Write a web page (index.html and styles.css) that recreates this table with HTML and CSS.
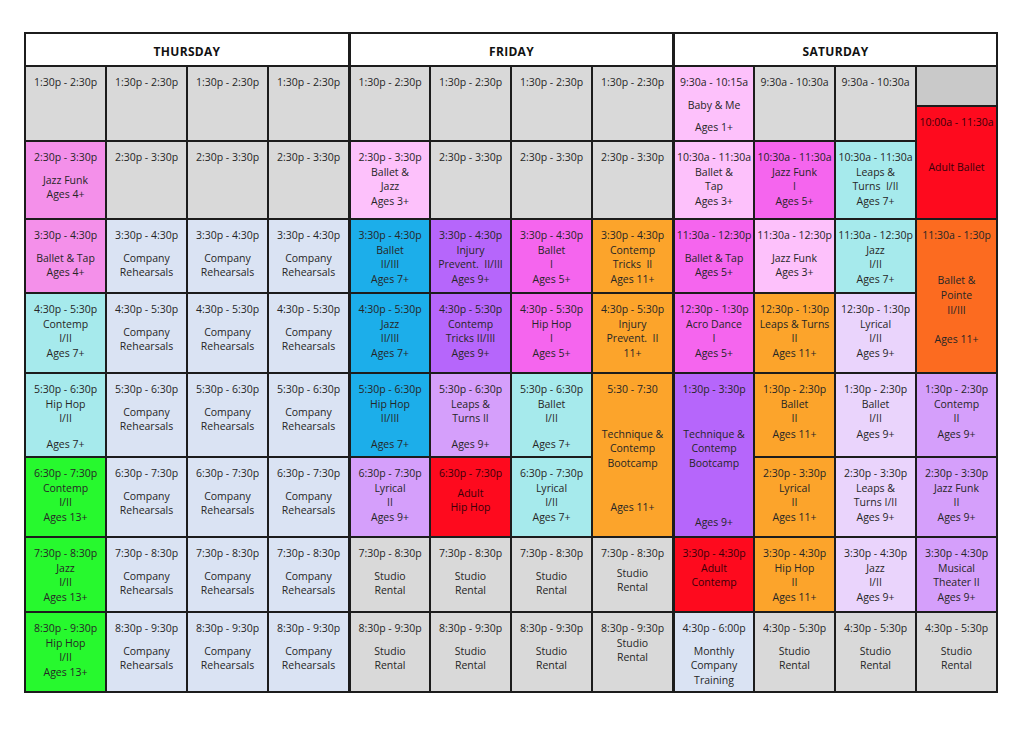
FILE: index.html
```html
<!DOCTYPE html>
<html lang="en">
<head>
<meta charset="utf-8">
<title>Class Schedule</title>
<link rel="stylesheet" href="styles.css">
</head>
<body>
<div class="schedule">
  <div class="day">THURSDAY</div>
  <div class="day ds">FRIDAY</div>
  <div class="day ds">SATURDAY</div>

  <!-- Row 1 -->
  <div class="cell gray tall"><p>1:30p - 2:30p</p></div>
  <div class="cell gray tall"><p>1:30p - 2:30p</p></div>
  <div class="cell gray tall"><p>1:30p - 2:30p</p></div>
  <div class="cell gray tall"><p>1:30p - 2:30p</p></div>
  <div class="cell gray tall ds"><p>1:30p - 2:30p</p></div>
  <div class="cell gray tall"><p>1:30p - 2:30p</p></div>
  <div class="cell gray tall"><p>1:30p - 2:30p</p></div>
  <div class="cell gray tall"><p>1:30p - 2:30p</p></div>
  <div class="cell lpink tall ds"><p>9:30a - 10:15a</p><p class="gm">Baby &amp; Me</p><p class="gm">Ages 1+</p></div>
  <div class="cell gray tall"><p>9:30a - 10:30a</p></div>
  <div class="cell gray tall"><p>9:30a - 10:30a</p></div>
  <div class="cell dgray"></div>
  <div class="cell red tall"><p>10:00a - 11:30a</p><p class="gxl">Adult Ballet</p></div>

  <!-- Row 2 -->
  <div class="cell pink"><p>2:30p - 3:30p</p><p class="gm">Jazz Funk</p><p>Ages 4+</p></div>
  <div class="cell gray"><p>2:30p - 3:30p</p></div>
  <div class="cell gray"><p>2:30p - 3:30p</p></div>
  <div class="cell gray"><p>2:30p - 3:30p</p></div>
  <div class="cell lpink ds"><p>2:30p - 3:30p</p><p>Ballet &amp;</p><p>Jazz</p><p>Ages 3+</p></div>
  <div class="cell gray"><p>2:30p - 3:30p</p></div>
  <div class="cell gray"><p>2:30p - 3:30p</p></div>
  <div class="cell gray"><p>2:30p - 3:30p</p></div>
  <div class="cell lpink ds"><p>10:30a - 11:30a</p><p>Ballet &amp;</p><p>Tap</p><p>Ages 3+</p></div>
  <div class="cell magenta"><p>10:30a - 11:30a</p><p>Jazz Funk</p><p>I</p><p>Ages 5+</p></div>
  <div class="cell cyan"><p>10:30a - 11:30a</p><p>Leaps &amp;</p><p>Turns&nbsp; I/II</p><p>Ages 7+</p></div>

  <!-- Row 3 -->
  <div class="cell pink"><p>3:30p - 4:30p</p><p class="gm">Ballet &amp; Tap</p><p>Ages 4+</p></div>
  <div class="cell company"><p>3:30p - 4:30p</p><p class="gm">Company</p><p>Rehearsals</p></div>
  <div class="cell company"><p>3:30p - 4:30p</p><p class="gm">Company</p><p>Rehearsals</p></div>
  <div class="cell company"><p>3:30p - 4:30p</p><p class="gm">Company</p><p>Rehearsals</p></div>
  <div class="cell blue ds"><p>3:30p - 4:30p</p><p>Ballet</p><p>II/III</p><p>Ages 7+</p></div>
  <div class="cell purple"><p>3:30p - 4:30p</p><p>Injury</p><p>Prevent.&nbsp; II/III</p><p>Ages 9+</p></div>
  <div class="cell magenta"><p>3:30p - 4:30p</p><p>Ballet</p><p>I</p><p>Ages 5+</p></div>
  <div class="cell orange"><p>3:30p - 4:30p</p><p>Contemp</p><p>Tricks&nbsp; II</p><p>Ages 11+</p></div>
  <div class="cell magenta ds"><p>11:30a - 12:30p</p><p class="gm">Ballet &amp; Tap</p><p>Ages 5+</p></div>
  <div class="cell lpink"><p>11:30a - 12:30p</p><p class="gm">Jazz Funk</p><p>Ages 3+</p></div>
  <div class="cell cyan"><p>11:30a - 12:30p</p><p>Jazz</p><p>I/II</p><p>Ages 7+</p></div>
  <div class="cell dorange tall"><p>11:30a - 1:30p</p><p class="gxl">Ballet &amp;</p><p class="gt">Pointe</p><p>II/III</p><p class="gl">Ages 11+</p></div>

  <!-- Row 4 -->
  <div class="cell cyan"><p>4:30p - 5:30p</p><p>Contemp</p><p>I/II</p><p>Ages 7+</p></div>
  <div class="cell company"><p>4:30p - 5:30p</p><p class="gm">Company</p><p>Rehearsals</p></div>
  <div class="cell company"><p>4:30p - 5:30p</p><p class="gm">Company</p><p>Rehearsals</p></div>
  <div class="cell company"><p>4:30p - 5:30p</p><p class="gm">Company</p><p>Rehearsals</p></div>
  <div class="cell blue ds"><p>4:30p - 5:30p</p><p>Jazz</p><p>II/III</p><p>Ages 7+</p></div>
  <div class="cell purple"><p>4:30p - 5:30p</p><p>Contemp</p><p>Tricks II/III</p><p>Ages 9+</p></div>
  <div class="cell magenta"><p>4:30p - 5:30p</p><p>Hip Hop</p><p>I</p><p>Ages 5+</p></div>
  <div class="cell orange"><p>4:30p - 5:30p</p><p>Injury</p><p>Prevent.&nbsp; II</p><p>11+</p></div>
  <div class="cell magenta ds"><p>12:30p - 1:30p</p><p>Acro Dance</p><p>I</p><p>Ages 5+</p></div>
  <div class="cell orange"><p>12:30p - 1:30p</p><p>Leaps &amp; Turns</p><p>II</p><p>Ages 11+</p></div>
  <div class="cell vlpurple"><p>12:30p - 1:30p</p><p>Lyrical</p><p>I/II</p><p>Ages 9+</p></div>

  <!-- Row 5 -->
  <div class="cell cyan"><p>5:30p - 6:30p</p><p>Hip Hop</p><p>I/II</p><p class="gb">Ages 7+</p></div>
  <div class="cell company"><p>5:30p - 6:30p</p><p class="gm">Company</p><p>Rehearsals</p></div>
  <div class="cell company"><p>5:30p - 6:30p</p><p class="gm">Company</p><p>Rehearsals</p></div>
  <div class="cell company"><p>5:30p - 6:30p</p><p class="gm">Company</p><p>Rehearsals</p></div>
  <div class="cell blue ds"><p>5:30p - 6:30p</p><p>Hip Hop</p><p>II/III</p><p class="gb">Ages 7+</p></div>
  <div class="cell lpurple"><p>5:30p - 6:30p</p><p>Leaps &amp;</p><p>Turns II</p><p class="gb">Ages 9+</p></div>
  <div class="cell cyan"><p>5:30p - 6:30p</p><p>Ballet</p><p>I/II</p><p class="gb">Ages 7+</p></div>
  <div class="cell orange tall"><p>5:30 - 7:30</p><p class="gxl">Technique &amp;</p><p>Contemp</p><p>Bootcamp</p><p class="gxl">Ages 11+</p></div>
  <div class="cell purple tall ds"><p>1:30p - 3:30p</p><p class="gxl">Technique &amp;</p><p>Contemp</p><p>Bootcamp</p><p class="gxxl">Ages 9+</p></div>
  <div class="cell orange"><p>1:30p - 2:30p</p><p>Ballet</p><p>II</p><p class="gt">Ages 11+</p></div>
  <div class="cell vlpurple"><p>1:30p - 2:30p</p><p>Ballet</p><p>I/II</p><p class="gt">Ages 9+</p></div>
  <div class="cell lpurple"><p>1:30p - 2:30p</p><p>Contemp</p><p>II</p><p class="gt">Ages 9+</p></div>

  <!-- Row 6 -->
  <div class="cell green"><p>6:30p - 7:30p</p><p>Contemp</p><p>I/II</p><p>Ages 13+</p></div>
  <div class="cell company"><p>6:30p - 7:30p</p><p class="gm">Company</p><p>Rehearsals</p></div>
  <div class="cell company"><p>6:30p - 7:30p</p><p class="gm">Company</p><p>Rehearsals</p></div>
  <div class="cell company"><p>6:30p - 7:30p</p><p class="gm">Company</p><p>Rehearsals</p></div>
  <div class="cell lpurple ds"><p>6:30p - 7:30p</p><p>Lyrical</p><p>II</p><p>Ages 9+</p></div>
  <div class="cell red"><p>6:30p - 7:30p</p><p class="gs">Adult</p><p>Hip Hop</p></div>
  <div class="cell cyan"><p>6:30p - 7:30p</p><p>Lyrical</p><p>I/II</p><p>Ages 7+</p></div>
  <div class="cell orange"><p>2:30p - 3:30p</p><p>Lyrical</p><p>II</p><p>Ages 11+</p></div>
  <div class="cell vlpurple"><p>2:30p - 3:30p</p><p>Leaps &amp;</p><p>Turns I/II</p><p>Ages 9+</p></div>
  <div class="cell lpurple"><p>2:30p - 3:30p</p><p>Jazz Funk</p><p>II</p><p>Ages 9+</p></div>

  <!-- Row 7 -->
  <div class="cell green"><p>7:30p - 8:30p</p><p>Jazz</p><p>I/II</p><p>Ages 13+</p></div>
  <div class="cell company"><p>7:30p - 8:30p</p><p class="gm">Company</p><p>Rehearsals</p></div>
  <div class="cell company"><p>7:30p - 8:30p</p><p class="gm">Company</p><p>Rehearsals</p></div>
  <div class="cell company"><p>7:30p - 8:30p</p><p class="gm">Company</p><p>Rehearsals</p></div>
  <div class="cell gray ds"><p>7:30p - 8:30p</p><p class="gm">Studio</p><p>Rental</p></div>
  <div class="cell gray"><p>7:30p - 8:30p</p><p class="gm">Studio</p><p>Rental</p></div>
  <div class="cell gray"><p>7:30p - 8:30p</p><p class="gm">Studio</p><p>Rental</p></div>
  <div class="cell gray"><p>7:30p - 8:30p</p><p class="gs">Studio</p><p>Rental</p></div>
  <div class="cell red ds"><p>3:30p - 4:30p</p><p>Adult</p><p>Contemp</p></div>
  <div class="cell orange"><p>3:30p - 4:30p</p><p>Hip Hop</p><p>II</p><p>Ages 11+</p></div>
  <div class="cell vlpurple"><p>3:30p - 4:30p</p><p>Jazz</p><p>I/II</p><p>Ages 9+</p></div>
  <div class="cell lpurple"><p>3:30p - 4:30p</p><p>Musical</p><p>Theater II</p><p>Ages 9+</p></div>

  <!-- Row 8 -->
  <div class="cell green"><p>8:30p - 9:30p</p><p>Hip Hop</p><p>I/II</p><p>Ages 13+</p></div>
  <div class="cell company"><p>8:30p - 9:30p</p><p class="gm">Company</p><p>Rehearsals</p></div>
  <div class="cell company"><p>8:30p - 9:30p</p><p class="gm">Company</p><p>Rehearsals</p></div>
  <div class="cell company"><p>8:30p - 9:30p</p><p class="gm">Company</p><p>Rehearsals</p></div>
  <div class="cell gray ds"><p>8:30p - 9:30p</p><p class="gm">Studio</p><p>Rental</p></div>
  <div class="cell gray"><p>8:30p - 9:30p</p><p class="gm">Studio</p><p>Rental</p></div>
  <div class="cell gray"><p>8:30p - 9:30p</p><p class="gm">Studio</p><p>Rental</p></div>
  <div class="cell gray"><p>8:30p - 9:30p</p><p>Studio</p><p>Rental</p></div>
  <div class="cell company ds"><p>4:30p - 6:00p</p><p class="gm">Monthly</p><p>Company</p><p>Training</p></div>
  <div class="cell gray"><p>4:30p - 5:30p</p><p class="gm">Studio</p><p>Rental</p></div>
  <div class="cell gray"><p>4:30p - 5:30p</p><p class="gm">Studio</p><p>Rental</p></div>
  <div class="cell gray"><p>4:30p - 5:30p</p><p class="gm">Studio</p><p>Rental</p></div>
</div>
</body>
</html>
```

FILE: styles.css
```css
* {
  box-sizing: border-box;
  margin: 0;
  padding: 0;
}

html,
body {
  background: #ffffff;
}

body {
  font-family: "Open Sans", "Liberation Sans", sans-serif;
  color: #262626;
}

.schedule {
  display: grid;
  grid-template-columns: repeat(12, 79px);
  grid-template-rows: 31px 38px 33px 76px 72px 78px 82px 78px 73px 78px;
  gap: 2px;
  padding: 2px;
  margin: 32px 0 0 24px;
  width: 974px;
  background: #1c1c1c;
}

.day {
  grid-column: span 4;
  background: #ffffff;
  display: flex;
  align-items: center;
  justify-content: center;
  padding-top: 4px;
  font-weight: 700;
  font-size: 12px;
  letter-spacing: 0.3px;
  color: #111111;
}

.cell {
  text-align: center;
  font-size: 10.5px;
  line-height: 14.6px;
  padding-top: 8px;
  white-space: nowrap;
}

.cell p {
  display: block;
}

.tall {
  grid-row: span 2;
}

/* thicker divider at the start of each day */
.ds {
  border-left: 1px solid #1c1c1c;
}

/* vertical spacing between lines */
.gt { margin-top: 1px; }
.gs { margin-top: 5px; }
.gm { margin-top: 8px; }
.gb { margin-top: 11px; }
.gl { margin-top: 15px; }
.gxl { margin-top: 30px; }
.gxxl { margin-top: 45px; }

/* colours */
.gray { background: #d9d9d9; }
.dgray { background: #c9c9c9; }
.company { background: #dae3f3; }
.pink { background: #f490ea; }
.lpink { background: #fdc1fb; }
.magenta { background: #f565ee; }
.cyan { background: #a6eaec; }
.blue { background: #1caeea; }
.purple { background: #b666fb; }
.lpurple { background: #d59ffb; }
.vlpurple { background: #ead4fc; }
.orange { background: #fca42b; }
.dorange { background: #fc6b20; }
.red { background: #fe0a1e; color: #3a0008; }
.green { background: #27f92e; }
```
